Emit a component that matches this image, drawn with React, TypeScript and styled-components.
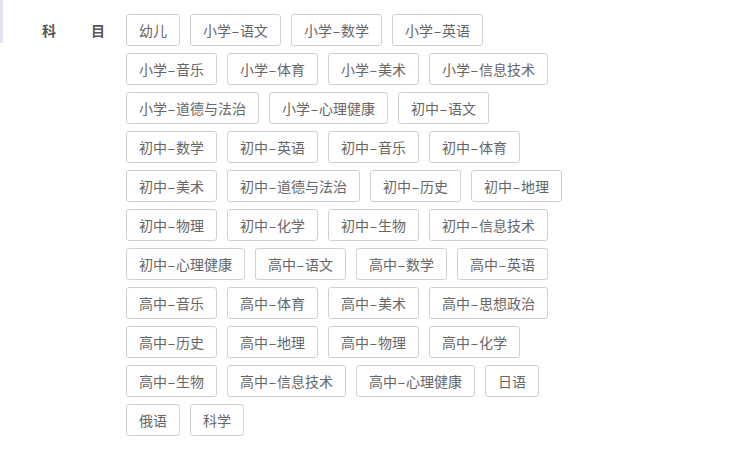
import React, { useState } from 'react';
import styled, { createGlobalStyle } from 'styled-components';

const GlobalStyle = createGlobalStyle`
  html, body {
    margin: 0;
    padding: 0;
    background: #fff;
  }
  body {
    font-family: "Microsoft YaHei", "Noto Sans CJK SC", "Liberation Sans", sans-serif;
  }
`;

const subjects = [
  '幼儿', '小学-语文', '小学-数学', '小学-英语',
  '小学-音乐', '小学-体育', '小学-美术', '小学-信息技术',
  '小学-道德与法治', '小学-心理健康', '初中-语文',
  '初中-数学', '初中-英语', '初中-音乐', '初中-体育',
  '初中-美术', '初中-道德与法治', '初中-历史', '初中-地理',
  '初中-物理', '初中-化学', '初中-生物', '初中-信息技术',
  '初中-心理健康', '高中-语文', '高中-数学', '高中-英语',
  '高中-音乐', '高中-体育', '高中-美术', '高中-思想政治',
  '高中-历史', '高中-地理', '高中-物理', '高中-化学',
  '高中-生物', '高中-信息技术', '高中-心理健康', '日语',
  '俄语', '科学',
];

const Page = styled.div`
  position: relative;
  padding: 14px 0 0 42px;
`;

const EdgeMark = styled.div`
  position: absolute;
  left: 0;
  top: 0;
  width: 3px;
  height: 43px;
  background: #e4e2f0;
`;

const FilterRow = styled.div`
  display: flex;
  align-items: flex-start;
`;

const Label = styled.div`
  width: 63px;
  margin-right: 21px;
  flex-shrink: 0;
  line-height: 32px;
  font-size: 14px;
  font-weight: bold;
  color: #555;
  text-align: justify;
  text-align-last: justify;
`;

const TagList = styled.div`
  display: flex;
  flex-wrap: wrap;
  gap: 7px 10px;
  width: 448px;
`;

const Tag = styled.button<{ $active?: boolean }>`
  height: 32px;
  padding: 0 12px;
  border: 1px solid ${p => (p.$active ? '#3a8ee6' : '#d0d0d0')};
  border-radius: 3px;
  background: #fff;
  color: ${p => (p.$active ? '#3a8ee6' : '#666')};
  font-family: inherit;
  font-size: 14px;
  line-height: 30px;
  white-space: nowrap;
  cursor: pointer;
`;

const Dash = styled.span`
  display: inline-block;
  width: 9px;
  text-align: center;
  transform: scaleX(1.7);
`;

function TagText({ text }: { text: string }) {
  const parts = text.split('-');
  if (parts.length < 2) return <>{text}</>;
  return (
    <>
      {parts[0]}
      <Dash>-</Dash>
      {parts.slice(1).join('-')}
    </>
  );
}

export default function App() {
  const [active, setActive] = useState<string | null>(null);

  return (
    <>
      <GlobalStyle />
      <Page>
        <EdgeMark />
        <FilterRow>
          <Label>科 目</Label>
          <TagList>
            {subjects.map(s => (
              <Tag key={s} $active={active === s} onClick={() => setActive(active === s ? null : s)}>
                <TagText text={s} />
              </Tag>
            ))}
          </TagList>
        </FilterRow>
      </Page>
    </>
  );
}
